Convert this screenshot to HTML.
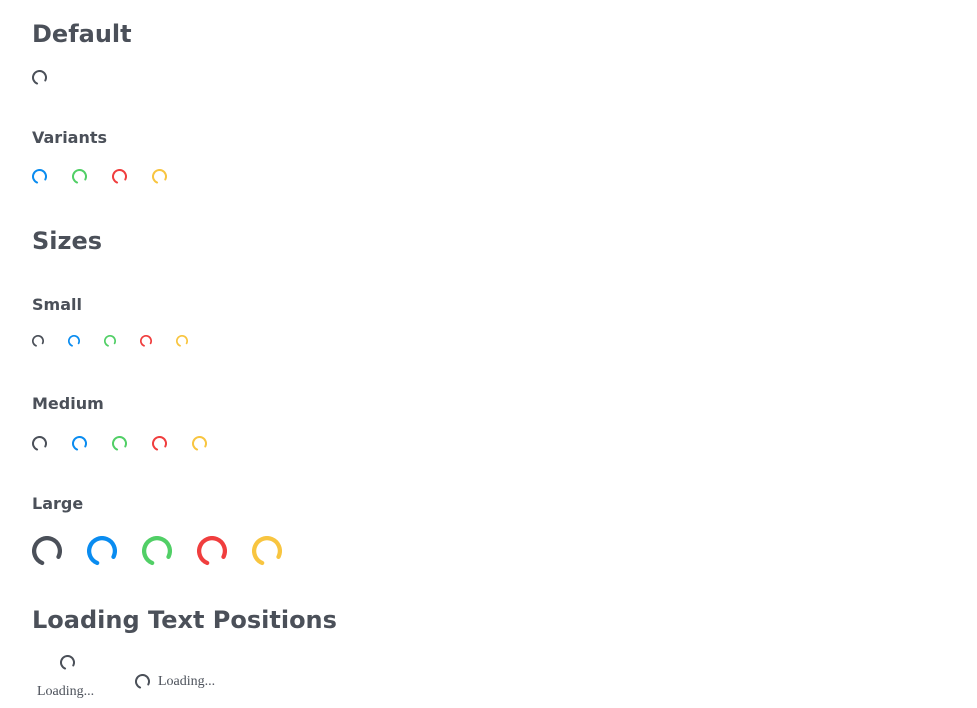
<!DOCTYPE html>
<html><head><meta charset="utf-8"><style>
html,body{margin:0;padding:0;background:#fff;width:977px;height:708px;overflow:hidden;position:relative}
.h{position:absolute;left:32px;font-family:"DejaVu Sans","Liberation Sans",sans-serif;font-weight:bold;color:#4b5059;line-height:1;margin:0;white-space:nowrap}
.h1{font-size:24px}.h2{font-size:16px}
svg{position:absolute;display:block}
.t{position:absolute;font-family:"Liberation Serif",serif;font-size:14px;color:#4b5059;line-height:1;white-space:nowrap}
</style></head><body>

<div class="h h1" style="top:22px">Default</div>
<div class="h h2" style="top:130px">Variants</div>
<div class="h h1" style="top:229px">Sizes</div>
<div class="h h2" style="top:297px">Small</div>
<div class="h h2" style="top:396px">Medium</div>
<div class="h h2" style="top:496px">Large</div>
<div class="h h1" style="top:608px">Loading Text Positions</div>
<div class="t" style="left:37px;top:685px">Loading...</div>
<div class="t" style="left:158px;top:675px">Loading...</div>

<script>
function sp(x,y,s,c,sw){
  var n='http://www.w3.org/2000/svg';
  var v=document.createElementNS(n,'svg');
  v.setAttribute('width',s);v.setAttribute('height',s);v.setAttribute('viewBox','0 0 24 24');
  v.style.left=x+'px';v.style.top=y+'px';
  var ci=document.createElementNS(n,'circle');
  var r=12-sw/2;
  ci.setAttribute('cx',12);ci.setAttribute('cy',12);ci.setAttribute('r',r);
  ci.setAttribute('fill','none');ci.setAttribute('stroke',c);ci.setAttribute('stroke-width',sw);
  ci.setAttribute('stroke-linecap','round');
  var C=2*Math.PI*r;
  ci.setAttribute('stroke-dasharray',(C*0.76)+' '+C);
  ci.setAttribute('transform','rotate(112 12 12)');
  v.appendChild(ci);document.body.appendChild(v);
}
var cols=['#4b5059','#0a8cf0','#51cf66','#f03e3e','#f8c540'];
sp(32,70,15,cols[0],3.2);
for(var i=1;i<5;i++)sp(32+40*(i-1),169,15,cols[i],3.2);
for(var i=0;i<5;i++)sp(32+36*i,335,12,cols[i],3.4);
for(var i=0;i<5;i++)sp(32+40*i,436,15,cols[i],3.2);
for(var i=0;i<5;i++)sp(32+55*i,536,30,cols[i],3.4);
sp(60,655,15,cols[0],3.2);
sp(135,674,15,cols[0],3.2);
</script>
</body></html>
